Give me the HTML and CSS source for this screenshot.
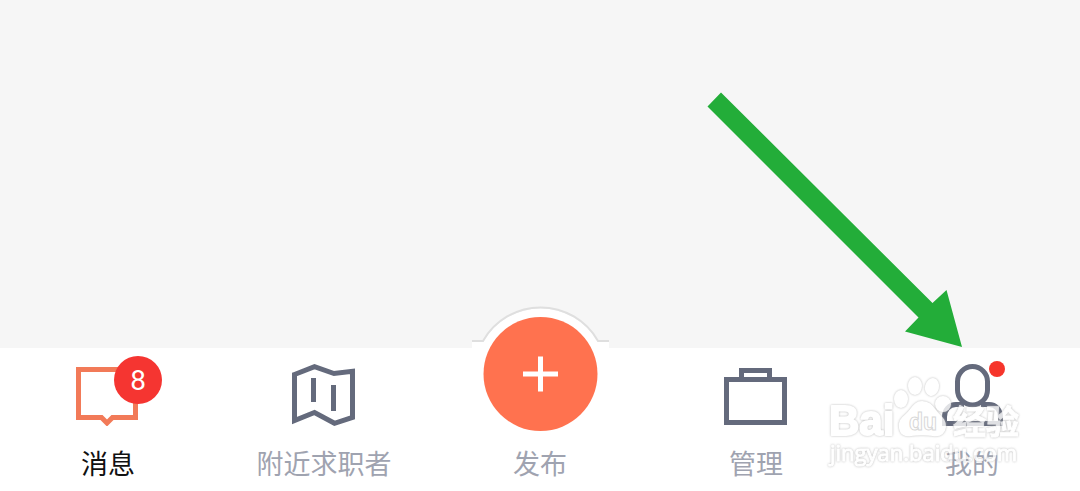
FILE: index.html
```html
<!DOCTYPE html>
<html lang="zh-CN">
<head>
  <meta charset="UTF-8">
  <meta name="viewport" content="width=device-width, initial-scale=1.0">
  <title>消息</title>
  <link rel="stylesheet" href="styles.css">
</head>
<body>
  <main class="content"></main>

  <!-- Tab bar -->
  <nav class="tabbar">
    <a href="#messages" class="tab tab-active">
      <span class="tab-icon">
        <svg viewBox="0 0 64 64" width="64" height="64" fill="none" stroke="#f27a58" stroke-width="5">
          <path d="M2.5 7.5H59.5V55.5H36.5L31 61L25.5 55.5H2.5Z"/>
        </svg>
        <span class="badge">8</span>
      </span>
      <span class="tab-label">消息</span>
    </a>

    <a href="#nearby" class="tab">
      <span class="tab-icon">
        <svg viewBox="0 0 64 64" width="64" height="64" fill="none" stroke="#646a7c" stroke-width="5">
          <path d="M2.5 12.5L22.5 4.7L42 11.5L60.5 9.3V55.5L42.5 61.3L22.5 50.5L2.5 58.5Z"/>
          <path d="M21.5 16V40M41.5 23V49"/>
        </svg>
      </span>
      <span class="tab-label">附近求职者</span>
    </a>

    <button type="button" class="tab">
      <svg class="publish-icon" viewBox="0 0 138 126" width="138" height="126">
        <path d="M1 36H12A66 66 0 0 1 127 36H138V46H1Z" fill="#fff"/>
        <path d="M1 35H12A66 66 0 0 1 127 35H138" fill="none" stroke="#dfdfdf" stroke-width="2"/>
        <circle cx="69.5" cy="68" r="57" fill="#ff724f"/>
        <path d="M52 68H87M69.5 50.5V85.5" stroke="#fff" stroke-width="5"/>
      </svg>
      <span class="tab-label">发布</span>
    </button>

    <a href="#manage" class="tab">
      <span class="tab-icon">
        <svg viewBox="0 0 64 64" width="64" height="64" fill="none" stroke="#646a7c" stroke-width="5">
          <path d="M2.5 17.5H60.5V60.5H2.5ZM17.5 17.5V8.5H45.5V17.5"/>
        </svg>
      </span>
      <span class="tab-label">管理</span>
    </a>

    <a href="#mine" class="tab">
      <span class="tab-icon">
        <svg viewBox="0 0 64 64" width="64" height="64" fill="none" stroke="#646a7c" stroke-width="5">
          <rect x="17.5" y="4.5" width="30" height="38.5" rx="15"/>
          <path d="M24 42.5H16C9 42.5 4.5 48 4.5 55V61.5H60.5V55C60.5 48 56 42.5 49 42.5H41"/>
        </svg>
        <span class="dot"></span>
      </span>
      <span class="tab-label">我的</span>
    </a>
  </nav>

  <!-- Arrow to the last tab -->
  <svg class="arrow" viewBox="0 0 256 256" width="256" height="256">
    <path d="M15 0.5L226.5 211L240.5 198L256 255L199 239.5L212.5 225.5L1.5 14.5Z" fill="#23ad39"/>
  </svg>

  <!-- Watermark -->
  <svg class="watermark" viewBox="0 0 200 100" width="200" height="100">
    <g class="mark">
      <ellipse cx="76" cy="29" rx="6" ry="8"/>
      <ellipse cx="90" cy="16" rx="6" ry="8"/>
      <ellipse cx="107" cy="17" rx="6" ry="8" transform="rotate(14 107 17)"/>
      <ellipse cx="118" cy="34" rx="7" ry="7"/>
      <path d="M97 32C89 32 87 40 81 45C76 49 74 52 75 58C76 64 80 66 86 65C93 64 101 64 108 65C115 66 119 63 120 57C120 51 118 49 113 44C108 39 106 32 97 32Z"/>
      <text class="mark-latin" x="4" y="65">Bai</text>
      <text class="mark-cjk" x="128" y="64">经验</text>
      <text class="mark-url" x="5" y="91">jingyan.baidu.com</text>
    </g>
    <text class="mark-du" x="84" y="60">du</text>
  </svg>
</body>
</html>
```

FILE: styles.css
```css
* {
  box-sizing: border-box;
}

body {
  position: relative;
  display: flex;
  flex-direction: column;
  min-height: 100vh;
  margin: 0;
  background-color: #f6f6f6;
  font-family: "Noto Sans CJK SC", sans-serif;
}

.content {
  flex: 1;
}

.tabbar {
  display: grid;
  grid-template-columns: repeat(5, 1fr);
  background-color: #fff;
}

.tab {
  display: flex;
  flex-direction: column;
  align-items: center;
  justify-content: flex-end;
  gap: 17px;
  padding: 14px 0 8px;
  border: none;
  background: none;
  color: #9fa3b0;
  font-family: inherit;
  font-size: 27px;
  line-height: 40px;
  text-decoration: none;
  cursor: pointer;
}

.tab-active {
  color: #111;
}

.tab svg {
  display: block;
}

.tab-icon {
  position: relative;
}

.publish-icon {
  margin-top: -56px;
  margin-bottom: -6px;
}

.badge {
  position: absolute;
  top: -6px;
  left: 38px;
  width: 48px;
  height: 48px;
  border-radius: 50%;
  background-color: #f53531;
  color: #fff;
  font-family: Roboto, sans-serif;
  font-size: 28px;
  line-height: 50px;
  text-align: center;
}

.dot {
  position: absolute;
  top: -1px;
  left: 49px;
  width: 16px;
  height: 16px;
  border-radius: 50%;
  background-color: #f6352b;
}

.arrow {
  position: absolute;
  right: 118px;
  bottom: 143px;
}

.watermark {
  position: absolute;
  right: 55px;
  bottom: 21px;
  overflow: visible;
  pointer-events: none;
}

/* white lettering with a thin grey rim */
.mark {
  fill: #fff;
  stroke: #fff;
  stroke-width: 2px;
  stroke-linejoin: round;
  filter: drop-shadow(0 0 1px #aaa);
  opacity: 0.8;
}

.mark-latin {
  font: bold 42px "Liberation Sans", sans-serif;
}

.mark-du {
  font: bold 23px "Liberation Sans", sans-serif;
  fill: #fff;
  stroke: #d8d8d8;
  stroke-width: 1px;
}

.mark-cjk {
  font: bold 33px "Noto Sans CJK SC", sans-serif;
  stroke-width: 1px;
}

.mark-url {
  font: 500 22px "Open Sans", sans-serif;
  stroke-width: 1px;
}
```
